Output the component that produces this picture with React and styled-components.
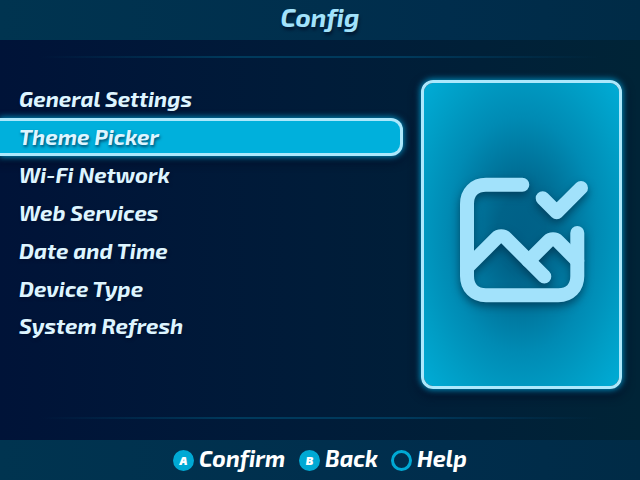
import React from "react";
import styled, { createGlobalStyle } from "styled-components";

const Global = createGlobalStyle`
  *, *::before, *::after { box-sizing: border-box; }
  body { margin: 0; overflow: hidden; }
`;

const Screen = styled.div`
  width: 640px;
  height: 480px;
  display: grid;
  grid-template-rows: 40px 400px 40px;
  overflow: hidden;
  background: linear-gradient(90deg, #001338 0%, #001c39 50%, #002437 100%);
  font-family: "Exo 2", "Open Sans", "Noto Sans", sans-serif;
  font-weight: 700;
  font-style: italic;
  font-variant-ligatures: none;
`;

const Header = styled.header`
  display: flex;
  justify-content: center;
  background: linear-gradient(90deg, #003450, #002d4c 70%, #002b46);
  color: #a2e2fb;
  text-shadow: 1px 3px 3px rgba(0, 10, 35, 0.65);
`;

const Label = styled.span`
  display: block;
  flex: none;
  white-space: nowrap;
  font-size: ${(p) => p.$size}px;
  line-height: ${(p) => p.$line}px;
`;

const Main = styled.main`
  display: grid;
  grid-template-rows: 2px 1fr 2px;
  padding: 16px 0 21px;
`;

const Rule = styled.div`
  margin: 0 40px;
  background: linear-gradient(90deg, transparent, #003a5c 35%, #003a5c 65%, transparent);
`;

const Content = styled.div`
  display: flex;
  justify-content: space-between;
  padding: 22px 18px 0 0;
`;

const Menu = styled.nav`
  display: flex;
  flex-direction: column;
  width: 403px;
`;

const MenuItem = styled.div`
  height: 37.9px;
  padding-left: 19px;
  color: #def5ff;
  text-shadow: 1px 2px 3px rgba(0, 15, 45, 0.6);
`;

const SelectedItem = styled(MenuItem)`
  height: 38px;
  border: 3px solid #ace8fc;
  border-left: 0;
  border-radius: 0 12px 12px 0;
  background: #00b0dc;
  box-shadow: 0 0 6px 1px #0090c0, 0 4px 9px 3px rgba(0, 12, 35, 0.7);
`;

const Preview = styled.section`
  display: flex;
  align-items: center;
  justify-content: center;
  width: 201px;
  height: 309px;
  padding: 11px 0 0 7px;
  border: 3px solid #ace8fc;
  border-radius: 12px;
  background: radial-gradient(ellipse farthest-corner at center, #006087 0%, #006389 18%, #008bb4 55%, #009dc5 78%, #00acd6 100%);
  background-clip: padding-box;
  box-shadow: 0 0 6px 1px #0090c0, 0 4px 9px 4px rgba(0, 12, 35, 0.6);
`;

const Artwork = styled.svg`
  width: 150px;
  height: 150px;
  overflow: visible;
  filter: drop-shadow(0 4px 4px rgba(0, 45, 70, 0.65));
`;

const Footer = styled.footer`
  display: flex;
  justify-content: center;
  background: linear-gradient(90deg, #003450, #002d4c 70%, #002b46);
  color: #fff;
`;

const Hint = styled.div`
  display: flex;
  align-items: flex-start;
  width: ${(p) => p.$width}px;
  gap: 5px;
`;

const Key = styled.span`
  display: flex;
  flex: none;
  align-items: center;
  justify-content: center;
  width: 21px;
  height: 21px;
  margin-top: 10px;
  border: 3px solid #00a9d4;
  border-radius: 50%;
  background: ${(p) => (p.$hollow ? "transparent" : "#00a9d4")};
  font-size: 11.5px;
  font-weight: 900;
  line-height: 15px;
`;

const items = [
  "General Settings",
  "Theme Picker",
  "Wi-Fi Network",
  "Web Services",
  "Date and Time",
  "Device Type",
  "System Refresh",
];

function PhotoCheck() {
  return (
    <Artwork viewBox="450 165 150 150" fill="none" stroke="#a2e2fb" strokeWidth="14" strokeLinecap="round" strokeLinejoin="round">
      <path d="M522.3 184.8H486C474.5 184.8 467 192.5 467 204V276C467 287.5 474.5 295.2 486 295.2H558.3C569.8 295.2 577.3 287.5 577.3 276V233" />
      <path d="M467 267.6L496.25 238.35A7 7 0 0 1 506.15 238.35L544.3 276.5" />
      <path d="M528.6 260.9L548.1 241.4A7 7 0 0 1 558 241.4L577.3 260.7" />
      <path d="M542.7 198.3L556.7 212.3L581 187.9" />
    </Artwork>
  );
}

export default function App() {
  return (
    <>
      <Global />
      <Screen>
        <Header><Label $size={26} $line={33}>Config</Label></Header>
        <Main>
          <Rule />
          <Content>
            <Menu>
              {items.map((text, i) => {
                const Row = i === 1 ? SelectedItem : MenuItem;
                return (
                  <Row key={text}>
                    <Label $size={22} $line={i === 1 ? 31 : 37}>{text}</Label>
                  </Row>
                );
              })}
            </Menu>
            <Preview><PhotoCheck /></Preview>
          </Content>
          <Rule />
        </Main>
        <Footer>
          <Hint $width={126}><Key>A</Key><Label $size={23} $line={37}>Confirm</Label></Hint>
          <Hint $width={92}><Key>B</Key><Label $size={23} $line={37}>Back</Label></Hint>
          <Hint $width={76}><Key $hollow /><Label $size={23} $line={37}>Help</Label></Hint>
        </Footer>
      </Screen>
    </>
  );
}
